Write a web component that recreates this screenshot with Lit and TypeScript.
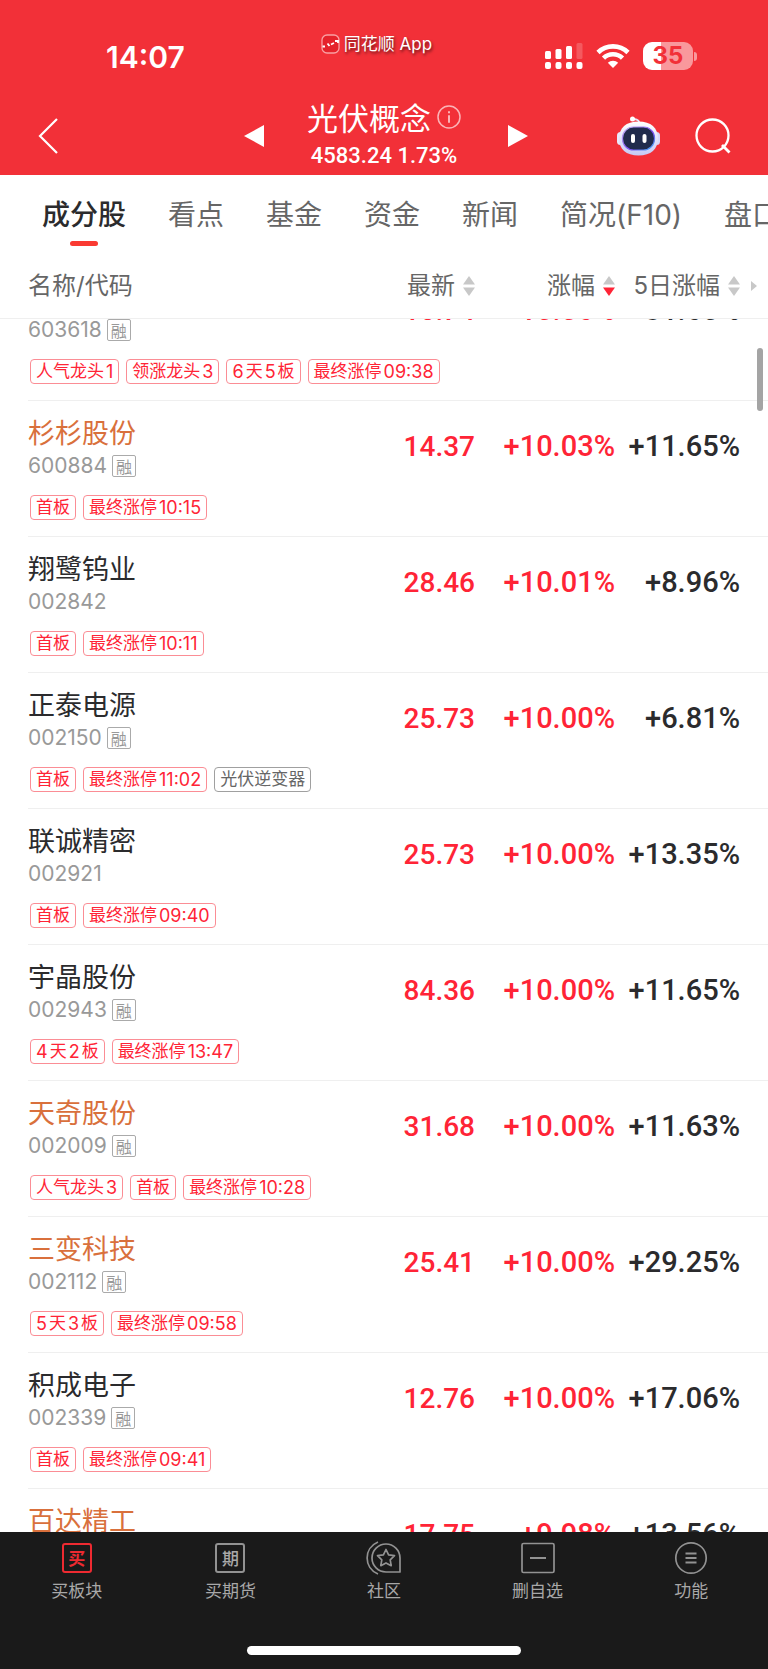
import { LitElement, html, css, svg, nothing } from "lit";
import { customElement, property } from "lit/decorators.js";
import { classMap } from "lit/directives/class-map.js";

interface Tag {
  parts: string[];
  plain?: boolean;
}

interface Stock {
  name: string;
  code: string;
  margin: boolean;
  hot?: boolean;
  price: string;
  change: string;
  five: string;
  tags: Tag[];
}

const first: Tag = { parts: ["首板"] };
const sealed = (time: string): Tag => ({ parts: ["最终涨停", time] });
const streak = (days: string, boards: string): Tag => ({ parts: [days, "天", boards, "板"] });

const STOCKS: Stock[] = [
  { name: "杭电股份", code: "603618", margin: true, price: "16.74", change: "+10.06%", five: "+31.60%", tags: [{ parts: ["人气龙头", "1"] }, { parts: ["领涨龙头", "3"] }, streak("6", "5"), sealed("09:38")] },
  { name: "杉杉股份", code: "600884", margin: true, hot: true, price: "14.37", change: "+10.03%", five: "+11.65%", tags: [first, sealed("10:15")] },
  { name: "翔鹭钨业", code: "002842", margin: false, price: "28.46", change: "+10.01%", five: "+8.96%", tags: [first, sealed("10:11")] },
  { name: "正泰电源", code: "002150", margin: true, price: "25.73", change: "+10.00%", five: "+6.81%", tags: [first, sealed("11:02"), { parts: ["光伏逆变器"], plain: true }] },
  { name: "联诚精密", code: "002921", margin: false, price: "25.73", change: "+10.00%", five: "+13.35%", tags: [first, sealed("09:40")] },
  { name: "宇晶股份", code: "002943", margin: true, price: "84.36", change: "+10.00%", five: "+11.65%", tags: [streak("4", "2"), sealed("13:47")] },
  { name: "天奇股份", code: "002009", margin: true, hot: true, price: "31.68", change: "+10.00%", five: "+11.63%", tags: [{ parts: ["人气龙头", "3"] }, first, sealed("10:28")] },
  { name: "三变科技", code: "002112", margin: true, hot: true, price: "25.41", change: "+10.00%", five: "+29.25%", tags: [streak("5", "3"), sealed("09:58")] },
  { name: "积成电子", code: "002339", margin: true, price: "12.76", change: "+10.00%", five: "+17.06%", tags: [first, sealed("09:41")] },
  { name: "百达精工", code: "603331", margin: true, hot: true, price: "17.75", change: "+9.98%", five: "+13.56%", tags: [first] },
];

const reset = css`
  * {
    box-sizing: border-box;
  }
  button {
    font: inherit;
    color: inherit;
    background: none;
    border: 0;
    padding: 0;
    margin: 0;
    display: flex;
    align-items: center;
    justify-content: center;
    cursor: pointer;
  }
  svg {
    display: block;
    flex: none;
  }
`;

@customElement("status-bar")
class StatusBar extends LitElement {
  static styles = [
    reset,
    css`
      :host {
        display: grid;
        grid-template-columns: 1fr auto 1fr;
        height: 96px;
        padding: 0 71px 0 106px;
        color: #fff;
      }
      .time {
        margin-top: 38px;
        font: 600 30px/38px Inter, sans-serif;
      }
      .brand {
        display: flex;
        align-items: center;
        gap: 4px;
        height: 24px;
        margin-top: 32px;
        margin-right: 50px;
        font: 17px/24px Inter, "Noto Sans CJK SC", sans-serif;
        text-shadow: 1px 2px 3px rgba(0, 0, 0, 0.6);
      }
      .signals {
        display: flex;
        align-items: center;
        justify-content: flex-end;
        gap: 13px;
        height: 28px;
        margin-top: 42px;
      }
      .battery {
        display: flex;
        align-items: center;
        gap: 1px;
      }
      .cell {
        width: 50px;
        height: 28px;
        border-radius: 9px;
        background: linear-gradient(90deg, #fff 35%, #f9989c 35%);
        color: #f23038;
        font: 700 24px/28px Inter, sans-serif;
        text-align: center;
      }
      .nub {
        width: 3px;
        height: 9px;
        border-radius: 0 4px 4px 0;
        background: #f9989c;
      }
    `,
  ];

  render() {
    return html`
      <div class="time">14:07</div>
      <div class="brand">
        <svg width="19" height="20" viewBox="0 0 19 20" fill="none">
          <rect x="1" y="1" width="17" height="18" rx="5" fill="#e5222b" stroke="#f9a0a3" stroke-width="1.3" />
          <path d="M1.500 12.500h2.500M6.500 9.500l2 2.500M10 10.500l3-1.500M14 7h3v2" stroke="#fff" stroke-width="1.8" />
        </svg>
        <span>同花顺 App</span>
      </div>
      <div class="signals">
        <svg width="38" height="28" viewBox="0 0 38 28" fill="#fff">
          <rect y="9" width="6" height="8" rx="1.5" />
          <rect x="10.500" y="7" width="6" height="10" rx="1.5" />
          <rect x="21" y="4" width="6" height="13" rx="1.5" />
          <rect x="31.500" y="1" width="6" height="16" rx="1.5" opacity=".2" />
          ${[0, 10.5, 21, 31.5].map((x) => svg`<rect x=${x} y="20" width="6" height="7" rx="2" />`)}
        </svg>
        <svg width="34" height="26" viewBox="0 0 34 26" fill="none" stroke="#fff" stroke-width="4.6">
          <path d="M2 9.500a21.500 21.500 0 0 1 30 0M7.500 15.200a13.500 13.500 0 0 1 19 0" />
          <path d="M17 25l5.200-5.200a7.500 7.500 0 0 0-10.400 0z" fill="#fff" stroke="none" />
        </svg>
        <div class="battery"><div class="cell">35</div><div class="nub"></div></div>
      </div>
    `;
  }
}

@customElement("board-header")
class BoardHeader extends LitElement {
  static styles = [
    reset,
    css`
      :host {
        display: grid;
        grid-template-columns: 1fr auto 1fr;
        height: 79px;
        padding: 0 36px 0 36px;
        color: #fff;
      }
      .side {
        display: flex;
        align-items: center;
        height: 80px;
      }
      .back {
        justify-content: flex-start;
        width: 60px;
        height: 60px;
      }
      .middle {
        display: flex;
        gap: 39px;
        height: 80px;
      }
      .step {
        width: 32px;
        padding-left: 4px;
      }
      .text {
        min-width: 150px;
        text-align: center;
      }
      .title {
        display: flex;
        justify-content: center;
        align-items: center;
        gap: 6px;
        margin: 0;
        font: 400 31px/42px "Noto Sans CJK SC", sans-serif;
      }
      .quote {
        font: 500 22px/36px Roboto, sans-serif;
        white-space: nowrap;
      }
      .actions {
        justify-content: flex-end;
        gap: 34px;
      }
    `,
  ];

  render() {
    return html`
      <div class="side">
        <button class="back" aria-label="返回">
          <svg width="24" height="38" viewBox="0 0 24 38" fill="none" stroke="#fff" stroke-width="2.200">
            <path d="M21 2L4 19l17 17" />
          </svg>
        </button>
      </div>
      <div class="middle">
        <button class="step" aria-label="上一个板块">
          <svg width="20" height="22" viewBox="0 0 20 22" fill="#fff"><path d="M0 11L20 0v22z" /></svg>
        </button>
        <div class="text">
          <h1 class="title">
            光伏概念
            <svg width="24" height="24" viewBox="0 0 24 24" fill="none" stroke="#fbb4b7" stroke-width="1.500">
              <circle cx="12" cy="12" r="11" />
              <path d="M12 10.200v7.500M12 6.200v2" stroke-width="2" />
            </svg>
          </h1>
          <div class="quote">4583.24 1.73%</div>
        </div>
        <button class="step" aria-label="下一个板块">
          <svg width="20" height="22" viewBox="0 0 20 22" fill="#fff"><path d="M20 11L0 0v22z" /></svg>
        </button>
      </div>
      <div class="side actions">
        <button aria-label="智能助手">
          <svg width="43" height="40" viewBox="0 0 43 40">
            <defs>
              <linearGradient id="shell" x1="0" y1="0" x2="0" y2="1">
                <stop offset="0" stop-color="#fff" />
                <stop offset="1" stop-color="#c5c9f5" />
              </linearGradient>
              <linearGradient id="rim" x1="0" y1="0" x2="1" y2="1">
                <stop offset="0" stop-color="#c9b8f5" />
                <stop offset=".6" stop-color="#7a4df0" />
                <stop offset="1" stop-color="#3fb4f5" />
              </linearGradient>
            </defs>
            <path d="M22 8c1-3-1-4.500-5-5" fill="none" stroke="#e9e6f8" stroke-width="1.800" />
            <circle cx="15.500" cy="3" r="2.500" fill="#fff" />
            <rect x="0" y="16" width="7" height="13" rx="3.500" fill="#e9e9fc" />
            <rect x="36" y="16" width="7" height="13" rx="3.500" fill="#d5d8fa" />
            <path d="M21.500 5.500C34 5.500 41 12 41 22.500S34 39.500 21.500 39.500 2 33 2 22.500 9 5.500 21.500 5.500z" fill="url(#shell)" />
            <rect x="5.500" y="11" width="32" height="23" rx="11" fill="#202b4c" stroke="url(#rim)" stroke-width="1.200" />
            <rect x="14" y="18" width="4" height="9" rx="2" fill="#fff" />
            <rect x="25.500" y="18" width="4" height="9" rx="2" fill="#fff" />
          </svg>
        </button>
        <button aria-label="搜索">
          <svg width="38" height="38" viewBox="0 0 38 38" fill="none" stroke="#fff" stroke-width="2.300">
            <circle cx="18.500" cy="18.500" r="16" />
            <path d="M28 28l7.500 7.500" stroke-width="2.800" />
          </svg>
        </button>
      </div>
    `;
  }
}

@customElement("stock-row")
class StockRow extends LitElement {
  @property({ attribute: false }) stock!: Stock;

  static styles = [
    reset,
    css`
      :host {
        display: block;
        height: 136px;
        margin-left: 28px;
        padding-right: 28px;
        border-bottom: 1px solid #efefef;
        overflow: hidden;
      }
      .main {
        display: grid;
        grid-template-columns: 1fr 140px 140px 125px;
        align-items: baseline;
        padding-top: 12px;
        height: 90px;
      }
      .id {
        align-self: start;
      }
      .name {
        height: 40px;
        font: 27px/38px "Noto Sans CJK SC", sans-serif;
        color: #2b2b2d;
      }
      .hot {
        color: #d9703c;
      }
      .code {
        display: flex;
        align-items: center;
        gap: 5px;
        height: 26px;
        font: 21px/26px Inter, sans-serif;
        color: #999;
      }
      .margin {
        width: 24px;
        height: 22px;
        border: 1px solid #aaa;
        border-radius: 2px;
        font: 16px/20px "Noto Sans CJK SC", sans-serif;
        text-align: center;
      }
      .num {
        padding-top: 15px;
        font: 500 29px/36px Roboto, sans-serif;
        text-align: right;
        white-space: nowrap;
        color: #2b2b2d;
      }
      .price {
        font-size: 28px;
      }
      .up {
        color: #ff2436;
      }
      .tags {
        display: flex;
        gap: 7px;
        margin: 4px 0 0 2px;
      }
      .tag {
        display: flex;
        gap: 2px;
        height: 25px;
        padding: 0 5px;
        border: 1px solid #fb8d95;
        border-radius: 4px;
        font: 17px/23px Inter, "Noto Sans CJK SC", sans-serif;
        color: #ff2436;
        white-space: nowrap;
      }
      .digits {
        font-size: 18px;
      }
      .plain {
        border-color: #a0a0a0;
        color: #666;
      }
    `,
  ];

  render() {
    const s = this.stock;
    return html`
      <div class="main">
        <div class="id">
          <div class=${classMap({ name: true, hot: !!s.hot })}>${s.name}</div>
          <div class="code">${s.code}${s.margin ? html`<span class="margin">融</span>` : nothing}</div>
        </div>
        <div class="num price up">${s.price}</div>
        <div class="num up">${s.change}</div>
        <div class="num">${s.five}</div>
      </div>
      <div class="tags">
        ${s.tags.map(
          (t) => html`<span class=${classMap({ tag: true, plain: !!t.plain })}>
            ${t.parts.map((p) => html`<span class=${classMap({ digits: /^\d/.test(p) })}>${p}</span>`)}
          </span>`
        )}
      </div>
    `;
  }
}

const TOOLS = [
  {
    label: "买板块",
    icon: html`<span class="glyph buy">买</span>`,
  },
  {
    label: "买期货",
    icon: html`<span class="glyph">期</span>`,
  },
  {
    label: "社区",
    icon: html`<svg width="36" height="34" viewBox="0 0 36 34" fill="none" stroke="#929292" stroke-width="1.700" stroke-linejoin="round">
      <path d="M20 3a14 14 0 1 0 0 28h14V17A14 14 0 0 0 20 3z" />
      <path d="M12 1C-2.500 7-2.500 27 12 33" />
      <path d="M20 8.500l2.600 5.400 5.900.8-4.300 4.100 1 5.900-5.200-2.800-5.200 2.800 1-5.900-4.300-4.100 5.900-.8z" />
    </svg>`,
  },
  {
    label: "删自选",
    icon: html`<svg width="34" height="32" viewBox="0 0 34 32" fill="none" stroke="#929292" stroke-width="1.700">
      <rect x="1" y="1.500" width="32" height="29" rx="1.500" />
      <path d="M9 16h16" stroke-width="2" />
    </svg>`,
  },
  {
    label: "功能",
    icon: html`<svg width="34" height="34" viewBox="0 0 34 34" fill="none" stroke="#929292" stroke-width="1.700">
      <circle cx="17" cy="17" r="15.200" />
      <path d="M11.500 12.500h11M11.500 17h11M11.500 21.500h11" stroke-width="2" />
    </svg>`,
  },
];

@customElement("bottom-bar")
class BottomBar extends LitElement {
  static styles = [
    reset,
    css`
      :host {
        display: flex;
        flex-direction: column;
        height: 137px;
        background: #1a1a1a;
        color: #a8a8a8;
      }
      .tools {
        display: grid;
        grid-template-columns: repeat(5, 1fr);
        padding-top: 8px;
      }
      .tool {
        flex-direction: column;
        font: 17px/24px "Noto Sans CJK SC", sans-serif;
      }
      .icon {
        display: flex;
        align-items: center;
        height: 36px;
        margin-bottom: 2px;
      }
      .glyph {
        width: 30px;
        height: 30px;
        border: 2px solid #929292;
        border-radius: 3px;
        font: 500 17px/25px "Noto Sans CJK SC", sans-serif;
      }
      .buy {
        border-color: #ee2a31;
        color: #ee2a31;
        font-weight: 700;
      }
      .home {
        width: 274px;
        height: 9px;
        margin: auto auto 14px;
        border-radius: 5px;
        background: #fff;
      }
    `,
  ];

  render() {
    return html`
      <nav class="tools">
        ${TOOLS.map((t) => html`<button class="tool"><span class="icon">${t.icon}</span>${t.label}</button>`)}
      </nav>
      <div class="home"></div>
    `;
  }
}

const TABS = ["成分股", "看点", "基金", "资金", "新闻", "简况(F10)", "盘口"];

@customElement("app-root")
class AppRoot extends LitElement {
  static styles = [
    reset,
    css`
      :host {
        display: flex;
        flex-direction: column;
        height: 100vh;
        background: #fff;
        overflow: hidden;
        font-family: Inter, "Noto Sans CJK SC", sans-serif;
      }
      .top {
        background: #f23038;
      }
      .tabs {
        display: flex;
        gap: 42px;
        height: 78px;
        padding: 19px 0 0 42px;
        overflow: hidden;
        font: 28px/42px Inter, "Noto Sans CJK SC", sans-serif;
        color: #666;
      }
      .tab {
        flex: none;
        flex-direction: column;
        justify-content: flex-start;
        height: 54px;
        white-space: nowrap;
      }
      .active {
        font-weight: 500;
        color: #2b2b2d;
      }
      .active::after {
        content: "";
        width: 28px;
        height: 5px;
        margin-top: 5px;
        border-radius: 3px;
        background: #fa3a32;
      }
      .columns {
        position: relative;
        display: grid;
        grid-template-columns: 1fr 140px 140px 125px;
        height: 66px;
        padding: 13px 28px 0 28px;
        border-bottom: 1px solid #efefef;
        font: 24px/40px Inter, "Noto Sans CJK SC", sans-serif;
        color: #666;
      }
      .sort {
        justify-content: flex-end;
        gap: 8px;
        height: 40px;
        white-space: nowrap;
      }
      .view {
        position: relative;
        flex: 1;
        min-height: 0;
      }
      .list {
        height: 100%;
        overflow-y: auto;
        scrollbar-width: none;
      }
      .thumb {
        position: absolute;
        top: 29px;
        right: 5px;
        width: 6px;
        height: 63px;
        border-radius: 3px;
        background: #a4a4a4;
      }
      .more {
        position: absolute;
        top: 28px;
        right: 11px;
      }
    `,
  ];

  async firstUpdated() {
    const list = this.renderRoot.querySelector(".list") as HTMLElement;
    await Promise.all([...list.querySelectorAll("stock-row")].map((r) => (r as LitElement).updateComplete));
    list.scrollTop = 54;
  }

  private sort(label: string, active = false) {
    return html`<button class="sort">
      ${label}
      <svg width="12" height="20" viewBox="0 0 12 20" fill="#c8c8c8">
        <path d="M6 0l6 8.500H0z" />
        <path d="M6 20l6-8.500H0z" fill=${active ? "#ff2436" : "#c8c8c8"} />
      </svg>
    </button>`;
  }

  render() {
    return html`
      <header class="top">
        <status-bar></status-bar>
        <board-header></board-header>
      </header>
      <nav class="tabs">
        ${TABS.map((t, i) => html`<button class=${classMap({ tab: true, active: i === 0 })}>${t}</button>`)}
      </nav>
      <div class="columns">
        <span>名称/代码</span>
        ${this.sort("最新")}${this.sort("涨幅", true)}${this.sort("5日涨幅")}
        <svg class="more" width="6" height="10" viewBox="0 0 6 10" fill="#c8c8c8"><path d="M0 0l6 5-6 5z" /></svg>
      </div>
      <main class="view">
        <div class="list">${STOCKS.map((s) => html`<stock-row .stock=${s}></stock-row>`)}</div>
        <div class="thumb"></div>
      </main>
      <bottom-bar></bottom-bar>
    `;
  }
}
